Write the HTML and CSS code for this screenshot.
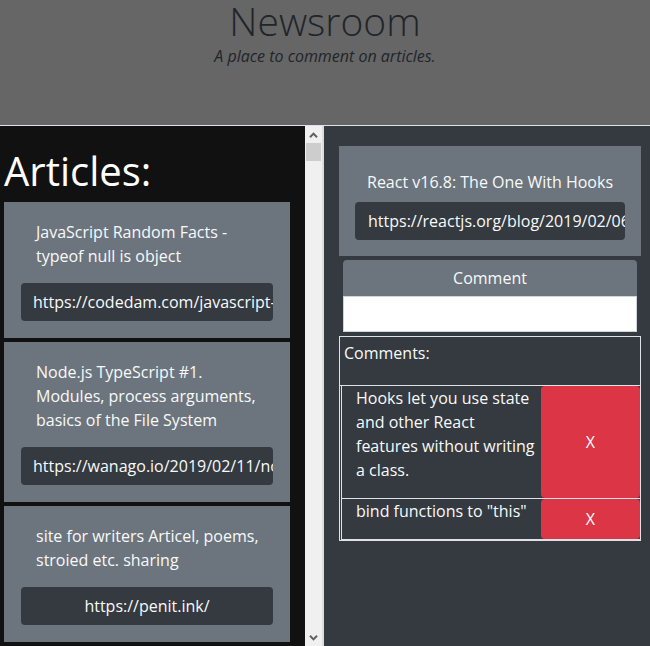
FILE: index.html
```html
<!DOCTYPE html>
<html lang="en">
<head>
<meta charset="utf-8">
<title>Newsroom</title>
<link rel="stylesheet" href="styles.css">
</head>
<body>
<header class="masthead">
  <h1 class="masthead-title">Newsroom</h1>
  <p class="masthead-tagline">A place to comment on articles.</p>
</header>
<main class="board">
  <section class="articles">
    <div class="articles-list">
      <h2 class="articles-heading">Articles:</h2>
      <div class="article-card">
        <p class="article-title">JavaScript Random Facts - typeof null is object</p>
        <a class="article-link">https://codedam.com/javascript-random-facts-typeof-null-is-object/</a>
      </div>
      <div class="article-card">
        <p class="article-title">Node.js TypeScript #1. Modules, process arguments, basics of the File System</p>
        <a class="article-link">https://wanago.io/2019/02/11/node-js-typescript-modules-file-system/</a>
      </div>
      <div class="article-card">
        <p class="article-title">site for writers Articel, poems, stroied etc. sharing</p>
        <a class="article-link">https://penit.ink/</a>
      </div>
      <div class="article-card">
        <p class="article-title">React v16.8: The One With Hooks</p>
        <a class="article-link">https://reactjs.org/blog/2019/02/06/react-v16.8.0.html</a>
      </div>
    </div>
    <div class="scrollbar">
      <div class="scroll-btn">
        <svg width="9" height="6" viewBox="0 0 9 6"><path d="M1 5.2 L4.5 1.6 L8 5.2" fill="none" stroke="#606060" stroke-width="2"/></svg>
      </div>
      <div class="scroll-thumb"></div>
      <div class="scroll-track"></div>
      <div class="scroll-btn">
        <svg width="9" height="6" viewBox="0 0 9 6"><path d="M1 0.8 L4.5 4.4 L8 0.8" fill="none" stroke="#606060" stroke-width="2"/></svg>
      </div>
    </div>
  </section>
  <section class="detail">
    <div class="detail-card">
      <p class="detail-title">React v16.8: The One With Hooks</p>
      <a class="detail-link">https://reactjs.org/blog/2019/02/06/react-v16.8.0.html</a>
    </div>
    <form class="comment-form">
      <button type="button" class="comment-btn">Comment</button>
      <input class="comment-input" type="text">
    </form>
    <div class="comments">
      <div class="comments-head"><p>Comments:</p></div>
      <div class="comment-row">
        <p class="comment-text">Hooks let you use state and other React features without writing a class.</p>
        <button type="button" class="comment-delete">X</button>
      </div>
      <div class="comment-row">
        <p class="comment-text">bind functions to "this"</p>
        <button type="button" class="comment-delete">X</button>
      </div>
    </div>
  </section>
</main>
</body>
</html>
```

FILE: styles.css
```css
* { box-sizing: border-box; }

html, body {
  margin: 0;
  padding: 0;
}

body {
  width: 650px;
  height: 646px;
  overflow: hidden;
  font-family: "Open Sans", "Noto Sans", sans-serif;
  font-size: 16px;
  line-height: 24px;
  color: #f8f9fa;
  background: #343a40;
}

.masthead {
  height: 126px;
  background: #666666;
  border-bottom: 1px solid #dee2e6;
  text-align: center;
  color: #212529;
  padding-top: 1px;
}

.masthead-title {
  margin: 0;
  font-size: 39px;
  line-height: 40px;
  font-weight: 300;
}

.masthead-tagline {
  margin: 3px 0 0;
  font-style: italic;
  font-size: 16px;
  line-height: 24px;
}

.board {
  display: flex;
  height: 520px;
}

.articles {
  display: flex;
  width: 324px;
  flex: none;
}

.articles-list {
  flex: 1;
  min-width: 0;
  overflow: hidden;
  background: #111111;
  padding: 21px 15px 0 4px;
}

.articles-heading {
  margin: 0 0 7px;
  font-size: 40px;
  line-height: 48px;
  font-weight: 400;
  color: #ffffff;
}

.article-card {
  background: #6c757d;
  padding: 18px 17px 17px;
  margin-bottom: 4px;
}

.article-title {
  margin: 0 0 15px;
  padding-left: 15px;
}

.article-link,
.detail-link {
  display: block;
  height: 38px;
  padding: 7px 12px;
  background: #343a40;
  border-radius: 4px;
  color: #f8f9fa;
  text-align: center;
  white-space: nowrap;
  overflow: hidden;
}

.scrollbar {
  width: 19px;
  flex: none;
  display: flex;
  flex-direction: column;
  background: #f0f0f0;
  border-right: 2px solid #dcdcdc;
}

.scroll-btn {
  height: 17px;
  display: flex;
  align-items: center;
  justify-content: center;
}

.scroll-btn svg { display: block; }

.scroll-thumb {
  height: 18px;
  margin: 0 1px;
  background: #cdcdcd;
}

.scroll-track { flex: 1; }

.detail {
  flex: 1;
  min-width: 0;
  padding: 20px 9px 0 15px;
}

.detail-card {
  background: #6c757d;
  padding: 24px 16px 16px;
}

.detail-title {
  margin: 0 0 8px;
  text-align: center;
}

.detail-link {
  padding: 7px 13px;
}

.comment-form {
  margin: 4px 4px 0;
}

.comment-btn {
  display: block;
  width: 100%;
  height: 36px;
  border: none;
  border-radius: 4px 4px 0 0;
  background: #6c757d;
  color: #f8f9fa;
  font: inherit;
  padding: 0;
}

.comment-input {
  display: block;
  width: 100%;
  height: 36px;
  margin: 0;
  border: 1px solid #ced4da;
  background: #ffffff;
}

.comments {
  margin-top: 4px;
  border: 1px solid #dee2e6;
}

.comments-head {
  padding: 4px 4px 4px;
  border-bottom: 1px solid #dee2e6;
}

.comments-head p { margin: 0 0 16px; }

.comment-row {
  display: grid;
  grid-template-columns: minmax(0, 2fr) minmax(0, 1fr);
  margin-left: 1px;
  border-left: 1px solid #dee2e6;
  border-bottom: 1px solid #dee2e6;
}

.comment-text {
  margin: 0 0 16px;
  padding: 0 5px 0 14px;
}

.comment-delete {
  border: none;
  border-radius: 4px;
  background: #dc3545;
  color: #ffffff;
  font: inherit;
  padding: 0;
}
```
